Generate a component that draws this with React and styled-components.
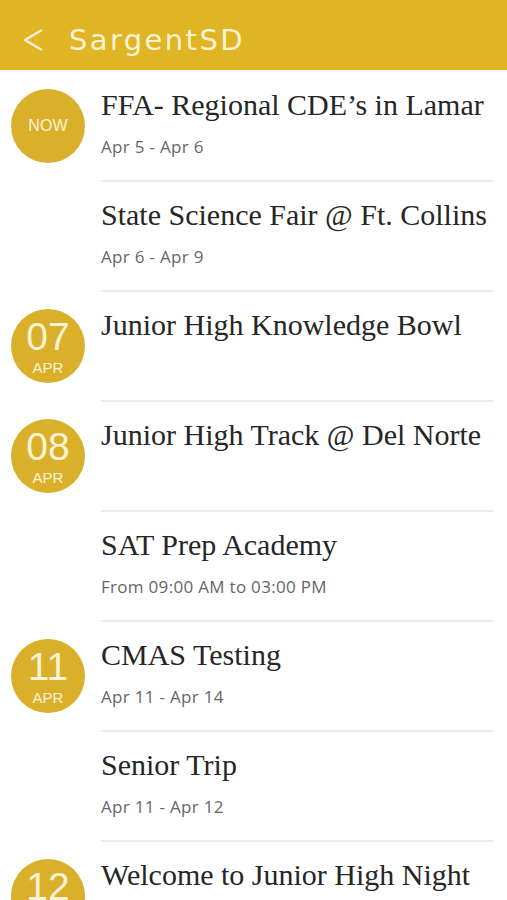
import styled, { createGlobalStyle } from 'styled-components';

const GlobalStyle = createGlobalStyle`
  html, body {
    margin: 0;
    padding: 0;
    background: #fff;
  }
  body {
    width: 507px;
    height: 900px;
    overflow: hidden;
  }
`;

const events = [
  { badge: 'now', title: 'FFA- Regional CDE’s in Lamar', sub: 'Apr 5 - Apr 6' },
  { title: 'State Science Fair @ Ft. Collins', sub: 'Apr 6 - Apr 9' },
  { day: '07', month: 'APR', title: 'Junior High Knowledge Bowl' },
  { day: '08', month: 'APR', title: 'Junior High Track @ Del Norte' },
  { title: 'SAT Prep Academy', sub: 'From 09:00 AM to 03:00 PM' },
  { day: '11', month: 'APR', title: 'CMAS Testing', sub: 'Apr 11 - Apr 14' },
  { title: 'Senior Trip', sub: 'Apr 11 - Apr 12' },
  { day: '12', month: 'APR', title: 'Welcome to Junior High Night' },
];

const App = () => {
  return (
    <Screen>
      <GlobalStyle />
      <Header>
        <BackIcon viewBox="0 0 20 22" aria-hidden="true">
          <path d="M18 1.5 L2 11 L18 20.5" />
        </BackIcon>
        <HeaderTitle>SargentSD</HeaderTitle>
      </Header>
      <List>
        {events.map((ev, i) => (
          <Row key={i}>
            <BadgeCell>
              {ev.badge === 'now' && (
                <Badge $centered>
                  <NowLabel>NOW</NowLabel>
                </Badge>
              )}
              {ev.day && (
                <Badge>
                  <Day>{ev.day}</Day>
                  <Month>{ev.month}</Month>
                </Badge>
              )}
            </BadgeCell>
            <Body $last={i === events.length - 1}>
              <Title>{ev.title}</Title>
              {ev.sub && <Sub>{ev.sub}</Sub>}
            </Body>
          </Row>
        ))}
      </List>
    </Screen>
  );
};

const Screen = styled.div`
  width: 507px;
  height: 900px;
  overflow: hidden;
  background: #fff;
  display: flex;
  flex-direction: column;
`;

const Header = styled.header`
  height: 70px;
  flex: none;
  background: #dfb425;
  display: flex;
  align-items: center;
  padding: 10px 0 0 23px;
  gap: 26px;
  box-sizing: border-box;
  box-shadow: 0 1px 2px rgba(0, 0, 0, 0.08);
`;

const BackIcon = styled.svg`
  width: 20px;
  height: 22px;
  fill: none;
  stroke: #fbf2d3;
  stroke-width: 2.4;
  stroke-linecap: round;
  stroke-linejoin: round;
`;

const HeaderTitle = styled.h1`
  margin: 0;
  font-family: 'DejaVu Sans', 'Open Sans', sans-serif;
  font-weight: 400;
  font-size: 29px;
  letter-spacing: 2.4px;
  color: #fbf2d3;
  line-height: 1;
`;

const List = styled.ul`
  list-style: none;
  margin: 0;
  padding: 2px 0 0;
`;

const Row = styled.li`
  display: flex;
  height: 110px;
`;

const BadgeCell = styled.div`
  width: 101px;
  flex: none;
  display: flex;
  justify-content: center;
  padding: 17px 5px 0 0;
  box-sizing: border-box;
`;

const Badge = styled.div`
  width: 74px;
  height: 74px;
  border-radius: 50%;
  background: #dab02a;
  color: #fcf3d6;
  font-family: 'Liberation Sans', Arial, sans-serif;
  display: flex;
  flex-direction: column;
  align-items: center;
  justify-content: ${(p) => (p.$centered ? 'center' : 'flex-start')};
  padding-top: ${(p) => (p.$centered ? '0' : '10px')};
  box-sizing: border-box;
`;

const NowLabel = styled.span`
  font-size: 16px;
  letter-spacing: 0.2px;
`;

const Day = styled.span`
  font-size: 39px;
  line-height: 36px;
`;

const Month = styled.span`
  font-size: 15px;
  line-height: 16px;
  margin-top: 5px;
`;

const Body = styled.div`
  flex: 1;
  margin-right: 14px;
  border-bottom: ${(p) => (p.$last ? 'none' : '2px solid #ebebeb')};
  padding-top: 16px;
  box-sizing: border-box;
`;

const Title = styled.div`
  font-family: 'Liberation Serif', 'Times New Roman', serif;
  font-size: 30px;
  color: #262626;
  line-height: 34px;
  white-space: nowrap;
`;

const Sub = styled.div`
  margin-top: 15px;
  font-family: 'Open Sans', 'Liberation Sans', sans-serif;
  font-size: 17px;
  letter-spacing: 0.3px;
  color: #666;
  line-height: 20px;
`;

export default App;
